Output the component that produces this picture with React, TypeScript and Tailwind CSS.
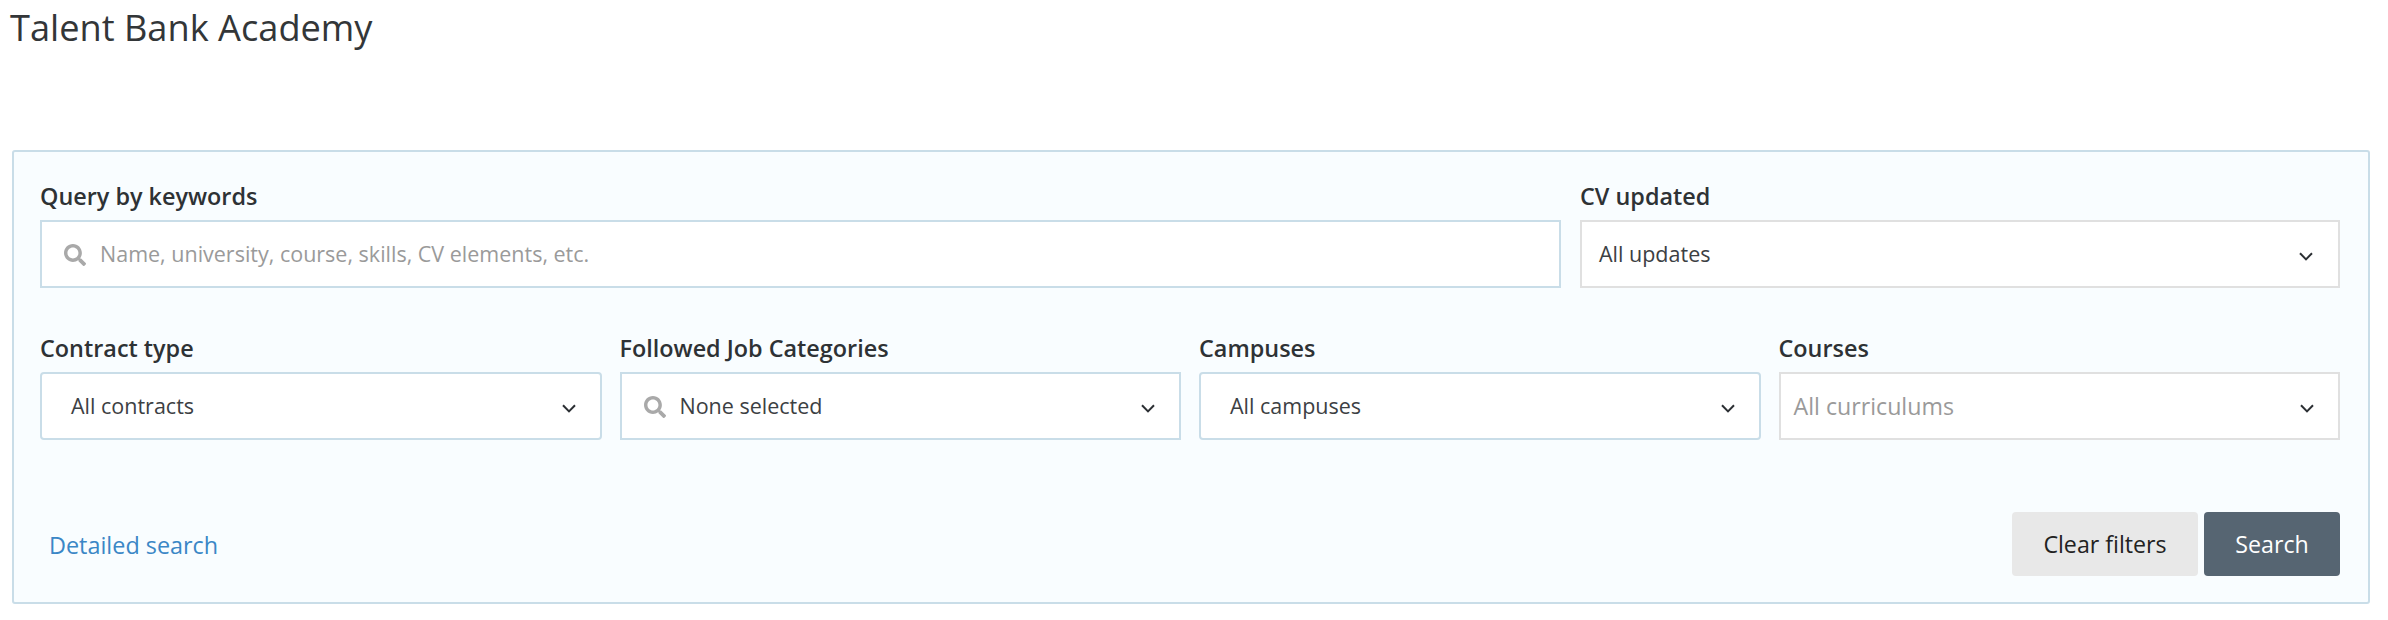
import React from "react";
import { FaSearch } from "react-icons/fa";

function Chevron() {
    return (
        <svg width="14" height="9" viewBox="0 0 14 9" fill="none" className="mt-[5px] shrink-0">
            <path d="M1 1.2 L7 7.4 L13 1.2" stroke="#2b2f33" strokeWidth="2" />
        </svg>
    );
}

function Field({
    label,
    value,
    search,
    muted,
    blue = true,
    rounded,
    textPad = "pl-[29px]",
    chevPad = "pr-[24px]",
}: {
    label: string;
    value: string;
    search?: boolean;
    muted?: boolean;
    blue?: boolean;
    rounded?: boolean;
    textPad?: string;
    chevPad?: string;
}) {
    return (
        <div className="flex flex-col">
            <label className="h-[43px] pt-[3px] text-[23.4px] leading-[32px] font-semibold text-[#2e3235]">{label}</label>
            <div
                className={`flex h-[68px] items-center justify-between border-2 bg-white ${textPad} ${chevPad} ${blue ? "border-[#c9dde8]" : "border-[#e0e0e0]"} ${rounded ? "rounded-[4px]" : ""}`}
            >
                <div className="flex items-center gap-[14px] pt-[1px]">
                    {search && <FaSearch className="text-[22px] text-[#a9a9a9]" />}
                    <span className={muted ? "text-[23.2px] text-[#9a9a9a]" : "text-[21.5px] text-[#3c4043]"}>{value}</span>
                </div>
                <Chevron />
            </div>
        </div>
    );
}

export default function App() {
    return (
        <div className="h-[620px] w-[2388px] bg-white font-['Open_Sans',sans-serif]">
            <h1 className="px-[10px] pt-[2px] text-[36.2px] leading-[50px] font-normal text-[#333638]">Talent Bank Academy</h1>

            {/* Filters panel */}
            <div className="mx-[12px] mt-[98px] h-[454px] w-[2358px] rounded-[3px] border-2 border-[#c9dde8] bg-[#f9fdff] pl-[26px] pr-[28px] pt-[25px]">
                <div className="grid grid-cols-[1521px_760px] gap-x-[19px]">
                    <div className="flex flex-col">
                        <label className="h-[43px] pt-[3px] text-[23.4px] leading-[32px] font-semibold text-[#2e3235]">Query by keywords</label>
                        <div className="flex h-[68px] items-center gap-[14px] border-2 border-[#c9dde8] bg-white pl-[22px] pt-[1px]">
                            <FaSearch className="text-[22px] text-[#a9a9a9]" />
                            <span className="text-[21.5px] text-[#9a9a9a]">Name, university, course, skills, CV elements, etc.</span>
                        </div>
                    </div>
                    <Field label="CV updated" value="All updates" blue={false} textPad="pl-[17px]" chevPad="pr-[25px]" />
                </div>

                <div className="mt-[41px] grid grid-cols-4 gap-x-[18px]">
                    <Field label="Contract type" value="All contracts" rounded />
                    <Field label="Followed Job Categories" value="None selected" search textPad="pl-[22px]" />
                    <Field label="Campuses" value="All campuses" rounded />
                    <Field label="Courses" value="All curriculums" muted blue={false} textPad="pl-[13px]" />
                </div>

                <div className="mt-[72px] flex items-center justify-between">
                    <a className="pl-[9px] pt-[4px] text-[23.4px] text-[#3b87c6]">Detailed search</a>
                    <div className="flex gap-[6px]">
                        <button className="h-[64px] w-[186px] rounded-[4px] bg-[#e8e8e8] text-[23.2px] text-[#222]">Clear filters</button>
                        <button className="h-[64px] w-[136px] rounded-[4px] bg-[#566572] text-[23.2px] text-white">Search</button>
                    </div>
                </div>
            </div>
        </div>
    );
}
